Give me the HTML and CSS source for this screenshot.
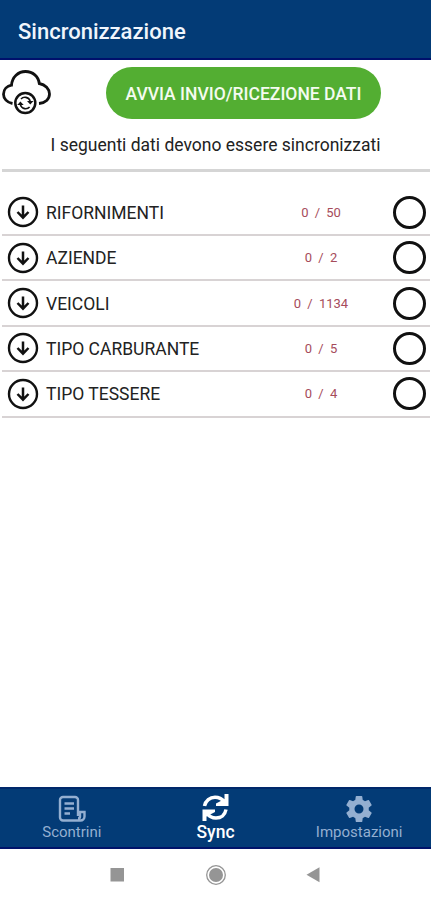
FILE: index.html
```html
<!DOCTYPE html>
<html lang="it">
<head>
<meta charset="utf-8">
<meta name="viewport" content="width=device-width, initial-scale=1">
<title>Sincronizzazione</title>
<link rel="stylesheet" href="styles.css">
</head>

<body>
  <svg width="0" height="0" class="icon-defs">
    <symbol id="arrow-down" viewBox="0 0 32 32">
      <circle cx="16" cy="16" r="14" fill="none" stroke="#111" stroke-width="2.4"/>
      <path d="M16 9.500v12M10.500 16l5.500 5.700 5.500-5.700" fill="none" stroke="#111" stroke-width="2.500"/>
    </symbol>
  </svg>

  <header class="top-bar">
    <h1>Sincronizzazione</h1>
  </header>

  <main class="content">
    <div class="sync-action">
      <svg class="cloud-icon" viewBox="0 0 50 46">
        <path d="M10.500 34.500C5 33.500 1.500 29.500 1.500 25.200c0-4.700 3.500-8.200 8-9C10.200 8 16.200 2.500 23.500 2.500S36.500 7.500 37.300 14.500c6 1 10.200 5.500 10.200 10.500 0 5-4 9-10.500 9.500" fill="none" stroke="#111" stroke-width="2.800"/>
        <circle cx="23.300" cy="34" r="10" fill="#fff" stroke="#111" stroke-width="2.500"/>
        <path d="M19 30c2.500-2.700 7.500-2.300 9.200 2M27.600 38c-2.500 2.700-7.500 2.300-9.200-2" fill="none" stroke="#111" stroke-width="1.600"/>
        <path d="M25 32h6.500l-3.200 3.500zM21.700 36h-6.500l3.200-3.500z" fill="#111"/>
      </svg>
      <button class="sync-button" type="button">AVVIA INVIO/RICEZIONE DATI</button>
    </div>
    <p class="message">I seguenti dati devono essere sincronizzati</p>

    <ul class="sync-list">
      <li class="sync-row">
        <svg class="row-icon"><use href="#arrow-down"/></svg>
        <span class="name">RIFORNIMENTI</span>
        <span class="count">0 / 50</span>
        <span class="status"></span>
      </li>
      <li class="sync-row">
        <svg class="row-icon"><use href="#arrow-down"/></svg>
        <span class="name">AZIENDE</span>
        <span class="count">0 / 2</span>
        <span class="status"></span>
      </li>
      <li class="sync-row">
        <svg class="row-icon"><use href="#arrow-down"/></svg>
        <span class="name">VEICOLI</span>
        <span class="count">0 / 1134</span>
        <span class="status"></span>
      </li>
      <li class="sync-row">
        <svg class="row-icon"><use href="#arrow-down"/></svg>
        <span class="name">TIPO CARBURANTE</span>
        <span class="count">0 / 5</span>
        <span class="status"></span>
      </li>
      <li class="sync-row">
        <svg class="row-icon"><use href="#arrow-down"/></svg>
        <span class="name">TIPO TESSERE</span>
        <span class="count">0 / 4</span>
        <span class="status"></span>
      </li>
    </ul>
  </main>

  <nav class="tab-bar">
    <a class="tab">
      <svg class="tab-icon" viewBox="0 0 28 28" fill="none" stroke="currentColor" stroke-width="2.400">
        <path d="M20 21V5a3 3 0 0 0-3-3H5a3 3 0 0 0-3 3v17.500a3 3 0 0 0 3 3h17.500a4 4 0 0 0 4-4V17H22v4.500a2 2 0 0 1-2 2M6.500 8.500h9.500M6.500 13.500h9.500M6.500 18.500h5.500"/>
      </svg>
      <span>Scontrini</span>
    </a>
    <a class="tab active">
      <svg class="tab-icon" viewBox="0 0 28 28">
        <path d="M3.500 12C4.500 6.500 9 3.200 14 3.200c4 0 7 1.600 9 4.300M25 15.500C24 21 20 24 15 24c-4 0-7-1.700-9-4.700" fill="none" stroke="currentColor" stroke-width="3.500"/>
        <path d="M27.500 0v12H15v-2.500L23.500 5V0zM1.500 27V15.500H14V18l-8.500 4.500V27z" fill="currentColor"/>
      </svg>
      <span>Sync</span>
    </a>
    <a class="tab">
      <svg class="tab-icon" viewBox="1.700 1.700 20.600 20.600">
        <path fill="currentColor" d="M19.140 12.940c.04-.3.060-.61.060-.94s-.02-.64-.07-.94l2.030-1.580a.49.490 0 0 0 .12-.61l-1.920-3.320a.49.490 0 0 0-.59-.22l-2.390.96a7 7 0 0 0-1.620-.94l-.36-2.540a.48.480 0 0 0-.48-.41h-3.840a.48.480 0 0 0-.47.410l-.36 2.540c-.59.240-1.130.57-1.620.94l-2.390-.96a.48.480 0 0 0-.59.220L2.740 8.870a.47.470 0 0 0 .12.610l2.030 1.580a6 6 0 0 0 0 1.880l-2.030 1.580a.49.490 0 0 0-.12.610l1.920 3.320c.12.220.37.290.59.220l2.390-.96c.5.380 1.030.7 1.620.94l.36 2.540c.05.240.24.410.48.410h3.840c.24 0 .44-.17.470-.41l.36-2.540c.59-.24 1.130-.56 1.620-.94l2.390.96c.22.080.47 0 .59-.22l1.920-3.320a.47.470 0 0 0-.12-.61zM12 15.300a3.300 3.300 0 1 1 0-6.600 3.300 3.300 0 0 1 0 6.600z"/>
      </svg>
      <span>Impostazioni</span>
    </a>
  </nav>

  <footer class="system-bar">
    <svg viewBox="0 0 24 24"><path d="M4.500 5H18v13.500H4.500z" fill="#959595"/></svg>
    <svg viewBox="0 0 24 24">
      <circle cx="12" cy="12" r="9.300" fill="none" stroke="#959595" stroke-width="1.300"/>
      <circle cx="12" cy="12" r="7" fill="#959595"/>
    </svg>
    <svg viewBox="0 0 24 24"><path d="M4.500 11.800l13-7.500v15z" fill="#959595"/></svg>
  </footer>
</body>
</html>
```

FILE: styles.css
```css
* {
  box-sizing: border-box;
}
body {
  background-color: #fff;
  color: #222;
  display: flex;
  flex-flow: column;
  font-family: Roboto, "Liberation Sans", sans-serif;
  height: 900px;
  margin: 0;
}
.icon-defs {
  position: absolute;
}
.top-bar {
  align-items: center;
  background-color: #033b76;
  border-bottom: 2px solid #00106c;
  display: flex;
  height: 60px;
  padding: 4px 18px 0;
}
.top-bar h1 {
  color: #f0f5fc;
  font-size: 22px;
  font-weight: 500;
  margin: 0;
}
.content {
  flex: 1;
}
.sync-action {
  align-items: flex-start;
  display: flex;
  padding: 7px 2px 0 1px;
}
.cloud-icon {
  height: 46px;
  margin: 2px 0 0 1px;
  width: 50px;
}
.sync-button {
  background-color: #53ae32;
  border: none;
  border-radius: 26px;
  color: #f4fbf0;
  font-family: inherit;
  font-size: 17.5px;
  font-weight: 500;
  height: 52px;
  margin-left: 54px;
  padding: 1px 0 0;
  white-space: nowrap;
  width: 275px;
}
.message {
  font-size: 17.5px;
  height: 50px;
  line-height: 52px;
  margin: 0 2px;
  text-align: center;
  white-space: nowrap;
}
.sync-list {
  border-top: 3px solid #d5d5d5;
  list-style: none;
  margin: 0 1px 0 2px;
  padding: 18.6px 0 0;
}
.sync-row {
  align-items: center;
  border-bottom: 2px solid #d8d3d4;
  display: grid;
  grid-template-columns: 39px 1fr 140px 37px;
  height: 45.4px;
  padding-left: 5px;
}
.row-icon {
  height: 32px;
  width: 32px;
}
.name {
  font-size: 17.5px;
  padding-top: 1px;
  white-space: nowrap;
}
.count {
  color: #a64c5b;
  font-size: 13px;
  padding-right: 4px;
  text-align: center;
  word-spacing: 3px;
}
.status {
  border: 3px solid #111;
  border-radius: 50%;
  height: 33px;
  width: 33px;
}
.tab-bar {
  background-color: #033b76;
  border-bottom: 2px solid #00136a;
  border-top: 2px solid #00286b;
  display: grid;
  grid-template-columns: repeat(3, 1fr);
  height: 62px;
}
.tab {
  align-items: center;
  color: #94afd1;
  display: flex;
  flex-flow: column;
  font-size: 15px;
  line-height: 19px;
  padding-top: 6px;
}
.tab-icon {
  height: 28px;
  width: 28px;
}
.active {
  color: #fff;
  font-size: 17.5px;
  font-weight: 500;
  line-height: 18px;
}
.active .tab-icon {
  margin-top: -1px;
  margin-bottom: 1px;
}
.system-bar {
  align-items: center;
  display: flex;
  gap: 74px;
  height: 51px;
  justify-content: center;
}
.system-bar svg {
  height: 24px;
  width: 24px;
}
```
